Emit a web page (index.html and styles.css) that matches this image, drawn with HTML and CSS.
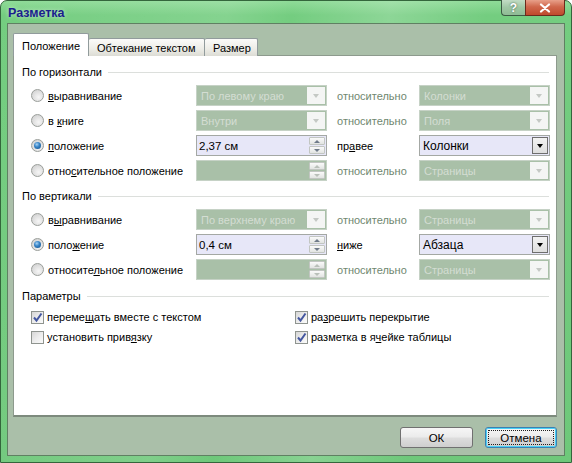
FILE: index.html
```html
<!DOCTYPE html>
<html lang="ru">
<head>
<meta charset="utf-8">
<title>Разметка</title>
<link rel="stylesheet" href="styles.css">
</head>
<body>
<div class="window">
  <div class="titlebar">
    <span class="title">Разметка</span>
    <div class="caption-btns">
      <div class="cbtn help">?</div>
      <div class="cbtn close">
        <svg width="12" height="10" viewBox="0 0 12 10"><path d="M2 1.5 L10 8.5 M10 1.5 L2 8.5" stroke="#fff" stroke-width="2.2" stroke-linecap="round"/></svg>
      </div>
    </div>
  </div>
  <div class="client">
    <div class="tabs">
      <div class="tab active">Положение</div>
      <div class="tab">Обтекание текстом</div>
      <div class="tab">Размер</div>
    </div>
    <div class="panel">
      <div class="group-title"><span>По горизонтали</span></div>
      <div class="rows">
        <div class="row">
          <div class="opt"><span class="radio"></span><span><u>в</u>ыравнивание</span></div>
          <div class="combo disabled"><span class="val">По левому краю</span><span class="arrow"></span></div>
          <span class="rel disabled">относительно</span>
          <div class="combo disabled"><span class="val">Колонки</span><span class="arrow"></span></div>
        </div>
        <div class="row">
          <div class="opt"><span class="radio"></span><span>в <u>к</u>ниге</span></div>
          <div class="combo disabled"><span class="val">Внутри</span><span class="arrow"></span></div>
          <span class="rel disabled">относительно</span>
          <div class="combo disabled"><span class="val">Поля</span><span class="arrow"></span></div>
        </div>
        <div class="row">
          <div class="opt"><span class="radio checked"></span><span><u>п</u>оложение</span></div>
          <div class="spin"><span class="val">2,37 см</span><span class="spinbtns"><span class="sb up"></span><span class="sb down"></span></span></div>
          <span class="rel">пр<u>а</u>вее</span>
          <div class="combo active"><span class="val">Колонки</span><span class="arrow"></span></div>
        </div>
        <div class="row">
          <div class="opt"><span class="radio"></span><span>отно<u>с</u>ительное положение</span></div>
          <div class="spin disabled"><span class="val"></span><span class="spinbtns"><span class="sb up"></span><span class="sb down"></span></span></div>
          <span class="rel disabled">относительно</span>
          <div class="combo disabled"><span class="val">Страницы</span><span class="arrow"></span></div>
        </div>
      </div>

      <div class="group-title sec"><span>По вертикали</span></div>
      <div class="rows">
        <div class="row">
          <div class="opt"><span class="radio"></span><span>в<u>ы</u>равнивание</span></div>
          <div class="combo disabled"><span class="val">По верхнему краю</span><span class="arrow"></span></div>
          <span class="rel disabled">относительно</span>
          <div class="combo disabled"><span class="val">Страницы</span><span class="arrow"></span></div>
        </div>
        <div class="row">
          <div class="opt"><span class="radio checked"></span><span>поло<u>ж</u>ение</span></div>
          <div class="spin"><span class="val">0,4 см</span><span class="spinbtns"><span class="sb up"></span><span class="sb down"></span></span></div>
          <span class="rel"><u>н</u>иже</span>
          <div class="combo active"><span class="val">Абзаца</span><span class="arrow"></span></div>
        </div>
        <div class="row">
          <div class="opt"><span class="radio"></span><span>относите<u>л</u>ьное положение</span></div>
          <div class="spin disabled"><span class="val"></span><span class="spinbtns"><span class="sb up"></span><span class="sb down"></span></span></div>
          <span class="rel disabled">относительно</span>
          <div class="combo disabled"><span class="val">Страницы</span><span class="arrow"></span></div>
        </div>
      </div>

      <div class="group-title sec2"><span>Параметры</span></div>
      <div class="checks">
        <div class="chk"><span class="box on"><svg width="11" height="11" viewBox="0 0 11 11"><path d="M2 5.5 L4.5 8.5 L9.5 1.5" fill="none" stroke="#4457a0" stroke-width="2"/></svg></span><span>переме<u>щ</u>ать вместе с текстом</span></div>
        <div class="chk"><span class="box on"><svg width="11" height="11" viewBox="0 0 11 11"><path d="M2 5.5 L4.5 8.5 L9.5 1.5" fill="none" stroke="#4457a0" stroke-width="2"/></svg></span><span>ра<u>з</u>решить перекрытие</span></div>
        <div class="chk"><span class="box"></span><span>установить прив<u>я</u>зку</span></div>
        <div class="chk"><span class="box on"><svg width="11" height="11" viewBox="0 0 11 11"><path d="M2 5.5 L4.5 8.5 L9.5 1.5" fill="none" stroke="#4457a0" stroke-width="2"/></svg></span><span>разметка в я<u>ч</u>ейке таблицы</span></div>
      </div>
    </div>
    <div class="buttons">
      <div class="btn">ОК</div>
      <div class="btn default"><span class="focus">Отмена</span></div>
    </div>
  </div>
</div>
</body>
</html>
```

FILE: styles.css
```css
html, body {
  margin: 0;
  padding: 0;
  background: #ffffff;
}
body {
  font-family: "Liberation Sans", "DejaVu Sans", sans-serif;
  font-size: 11px;
  color: #000;
}
u { text-decoration: underline; text-underline-offset: 1px; }

.window {
  width: 572px;
  height: 463px;
  box-sizing: border-box;
  display: flex;
  flex-direction: column;
  border: 1px solid #34663c;
  border-radius: 7px 7px 0 0;
  padding: 0 6px 6px 6px;
  background:
    linear-gradient(100deg, rgba(255,255,255,0) 0%, rgba(255,255,255,0.12) 35%, rgba(255,255,255,0) 45%, rgba(255,255,255,0.18) 60%, rgba(255,255,255,0) 75%),
    linear-gradient(180deg, #8fdb98 0px, #74cd80 14px, #6ec87a 100%);
}

.titlebar {
  height: 22px;
  flex: none;
  display: flex;
  align-items: flex-start;
  justify-content: space-between;
}
.title {
  font-family: "Liberation Sans", sans-serif;
  font-weight: bold;
  font-size: 12.5px;
  color: #1b1d8e;
  padding: 5px 0 0 1px;
  text-shadow: 0 0 4px rgba(255,255,255,0.6);
}
.caption-btns {
  display: flex;
  margin-top: -1px;
}
.cbtn {
  height: 16px;
  box-sizing: border-box;
  display: flex;
  align-items: center;
  justify-content: center;
  border: 1px solid #3c5a44;
  border-top: none;
}
.help {
  width: 24px;
  border-radius: 0 0 0 4px;
  background: linear-gradient(180deg, #c2dcc5 0%, #9fc7a4 50%, #8fbb95 100%);
  color: #fff;
  font-family: "Liberation Sans", sans-serif;
  font-weight: bold;
  font-size: 12px;
  text-shadow: 0 0 2px #35533b;
  border-right: none;
}
.close {
  width: 40px;
  border-radius: 0 0 4px 0;
  background: linear-gradient(180deg, #e8a08a 0%, #d0674c 45%, #bf4a2c 100%);
  border-color: #6b2a1c;
}

.client {
  flex: 1;
  display: flex;
  flex-direction: column;
  background: #aabfa9;
  border: 1px solid #5f8062;
  padding: 9px 7px 0 5px;
}

.tabs {
  display: flex;
  align-items: flex-end;
  height: 23px;
  position: relative;
  z-index: 1;
  margin-bottom: -1px;
}
.tab {
  box-sizing: border-box;
  height: 18px;
  padding: 2px 7px 0 8px;
  border: 1px solid #919b9c;
  border-bottom: none;
  border-left: none;
  border-radius: 2px 2px 0 0;
  background: linear-gradient(180deg, #fbfbf9 0%, #ecece6 60%, #dcdcd5 100%);
  white-space: nowrap;
  line-height: 14px;
}
.tab.active {
  height: 23px;
  border-left: 1px solid #919b9c;
  background: #ffffff;
  padding: 5px 8px 0 8px;
  width: 76px;
}
.tab:nth-child(2) { width: 116px; }
.tab:nth-child(3) { width: 53px; }

.panel {
  flex: 1;
  box-sizing: border-box;
  background: #ffffff;
  border: 1px solid #8d9a8d;
  border-bottom: 2px solid #7d8a7d;
  padding: 8px 7px 0 0;
}

.group-title {
  display: flex;
  align-items: center;
  height: 16px;
  padding-left: 8px;
  margin-bottom: 3px;
}
.group-title::after {
  content: "";
  flex: 1;
  height: 1px;
  background: #dcdfdc;
  margin-left: 6px;
}
.group-title.sec { margin-top: 5px; }
.group-title.sec2 { margin-top: 6px; margin-bottom: 3px; }

.rows { padding-left: 17px; }
.row {
  display: grid;
  grid-template-columns: 165px 131px 92px 131px;
  align-items: center;
  height: 25px;
}
.opt {
  display: flex;
  align-items: center;
  gap: 4px;
  white-space: nowrap;
}
.radio {
  width: 13px;
  height: 13px;
  box-sizing: border-box;
  border-radius: 50%;
  border: 1px solid #9a9e9a;
  background: radial-gradient(circle at 60% 65%, #f6f6f6 0%, #e3e3e3 45%, #c9c9c9 100%);
  display: flex;
  align-items: center;
  justify-content: center;
}
.radio.checked::after {
  content: "";
  width: 7px;
  height: 7px;
  border-radius: 50%;
  background: radial-gradient(circle at 40% 35%, #a9d4f5 0%, #3a86c8 40%, #104c86 100%);
}

.combo, .spin {
  height: 21px;
  box-sizing: border-box;
  display: flex;
  align-items: stretch;
  border: 1px solid #c6d2c6;
  padding: 1px;
}
.val {
  flex: 1;
  display: flex;
  align-items: center;
  padding-left: 3px;
  white-space: nowrap;
  overflow: hidden;
}
.combo.disabled, .spin.disabled {
  background: #a9c0a8;
}
.combo.disabled .val { color: #d4ddd3; }
.combo .arrow {
  width: 16px;
  display: flex;
  align-items: center;
  justify-content: center;
}
.combo.disabled .arrow {
  background: #f4f5f4;
  border: 1px solid #f4f5f4;
}
.combo.disabled .arrow::after {
  content: "";
  border-left: 3.5px solid transparent;
  border-right: 3.5px solid transparent;
  border-top: 4px solid #c4c8c4;
  margin-top: 1px;
}
.combo.active {
  background: #e7e7f8;
  border-color: #a4a8a4;
}
.combo.active .val { font-size: 12px; padding-left: 2px; }
.combo.active .arrow {
  box-sizing: border-box;
  border: 1px solid #6e6e6e;
  background: linear-gradient(180deg, #f2f2f2 0%, #dedede 100%);
}
.combo.active .arrow::after {
  content: "";
  border-left: 3.5px solid transparent;
  border-right: 3.5px solid transparent;
  border-top: 4px solid #000;
  margin-top: 1px;
}

.spin {
  background: #e7e7f8;
  border-color: #a4a8a4;
}
.spin .val { font-size: 11.5px; padding-left: 1px; }
.spin.disabled { border-color: #c6d2c6; }
.spinbtns {
  width: 16px;
  display: flex;
  flex-direction: column;
  gap: 1px;
}
.sb {
  flex: 1;
  display: flex;
  align-items: center;
  justify-content: center;
  background: linear-gradient(180deg, #fafafa, #e2e4e2);
  border: 1px solid #c2c6c2;
  border-radius: 1px;
}
.sb.up::after {
  content: "";
  border-left: 3px solid transparent;
  border-right: 3px solid transparent;
  border-bottom: 3px solid #6f7a8a;
}
.sb.down::after {
  content: "";
  border-left: 3px solid transparent;
  border-right: 3px solid transparent;
  border-top: 3px solid #6f7a8a;
}
.spin.disabled .sb.up::after { border-bottom-color: #b9c0b9; }
.spin.disabled .sb.down::after { border-top-color: #b9c0b9; }

.rel {
  padding-left: 10px;
  white-space: nowrap;
}
.rel.disabled { color: #6f876f; }

.checks {
  display: grid;
  grid-template-columns: 264px 250px;
  padding-left: 17px;
}
.chk {
  display: flex;
  align-items: center;
  gap: 3px;
  height: 20px;
  white-space: nowrap;
}
.box {
  width: 13px;
  height: 13px;
  box-sizing: border-box;
  border: 1px solid #8f948f;
  background: linear-gradient(135deg, #d6d6d6 0%, #ececec 50%, #fbfbfb 100%);
  display: flex;
  align-items: center;
  justify-content: center;
}

.buttons {
  display: flex;
  justify-content: flex-end;
  gap: 12px;
  margin: 10px 0 7px 0;
  height: 21px;
}
.btn {
  width: 73px;
  height: 21px;
  box-sizing: border-box;
  border: 1px solid #707070;
  border-radius: 3px;
  background: linear-gradient(180deg, #f6f6f6 0%, #ebebeb 48%, #dddddd 52%, #cfcfcf 100%);
  display: flex;
  align-items: center;
  justify-content: center;
  font-size: 11.5px;
}
.btn.default {
  width: 72px;
  border-color: #3c7fb1;
  box-shadow: inset 0 0 0 1px #48d2f8;
  padding: 2px;
}
.btn .focus {
  flex: 1;
  align-self: stretch;
  display: flex;
  align-items: center;
  justify-content: center;
  border: 1px dotted #202020;
}
```
